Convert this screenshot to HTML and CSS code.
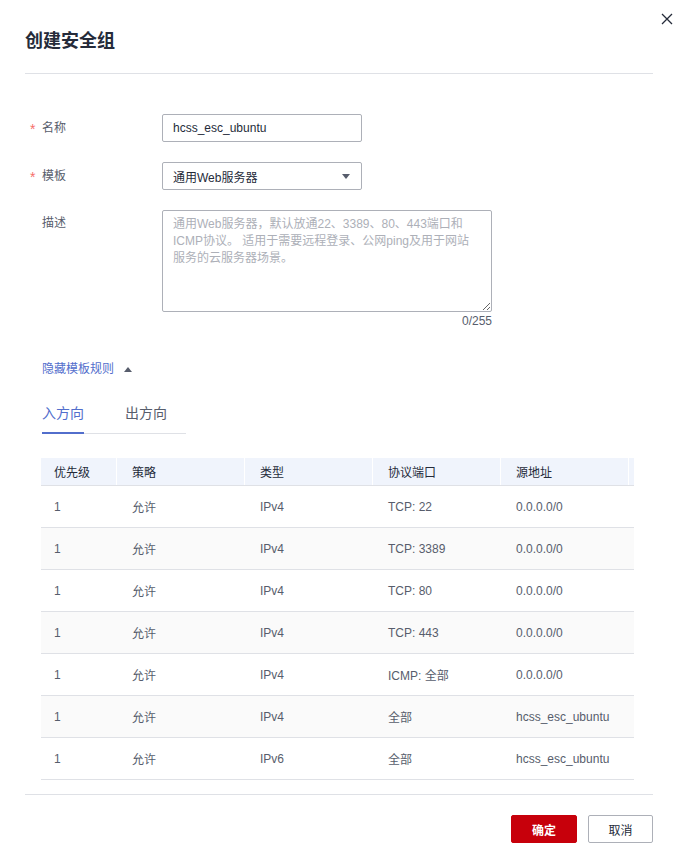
FILE: index.html
```html
<!DOCTYPE html>
<html lang="zh-CN">

<head>
    <meta charset="UTF-8">
    <meta name="viewport" content="width=device-width, initial-scale=1.0">
    <title>创建安全组</title>
    <link rel="stylesheet" href="styles.css">
</head>

<body>
    <div class="dialog">
        <div class="dialog-header">
            <h2>创建安全组</h2>
        </div>
        <span class="close">
            <svg width="12" height="12" viewBox="0 0 12 12"><path d="M1 1L11 11M11 1L1 11" stroke="#252b3a" stroke-width="1.3" fill="none"/></svg>
        </span>

        <div class="form">
            <div class="form-row">
                <label class="form-label required">名称</label>
                <input class="input" type="text" value="hcss_esc_ubuntu">
            </div>
            <div class="form-row">
                <label class="form-label required">模板</label>
                <div class="select">
                    <span>通用Web服务器</span>
                    <span class="select-arrow"></span>
                </div>
            </div>
            <div class="form-row top">
                <label class="form-label">描述</label>
                <div class="textarea-wrap">
                    <textarea class="textarea" placeholder="通用Web服务器，默认放通22、3389、80、443端口和&#10;ICMP协议。 适用于需要远程登录、公网ping及用于网站&#10;服务的云服务器场景。"></textarea>
                    <div class="counter">0/255</div>
                </div>
            </div>
        </div>

        <div class="rules">
            <a class="toggle">隐藏模板规则 <span class="caret"></span></a>

            <div class="tabs">
                <span class="tab active">入方向</span>
                <span class="tab">出方向</span>
            </div>

            <div class="rule-table">
                <div class="rule-row head">
                    <span>优先级</span><span>策略</span><span>类型</span><span>协议端口</span><span>源地址</span><span></span>
                </div>
                <div class="rule-row">
                    <span>1</span><span>允许</span><span>IPv4</span><span>TCP: 22</span><span>0.0.0.0/0</span><span></span>
                </div>
                <div class="rule-row">
                    <span>1</span><span>允许</span><span>IPv4</span><span>TCP: 3389</span><span>0.0.0.0/0</span><span></span>
                </div>
                <div class="rule-row">
                    <span>1</span><span>允许</span><span>IPv4</span><span>TCP: 80</span><span>0.0.0.0/0</span><span></span>
                </div>
                <div class="rule-row">
                    <span>1</span><span>允许</span><span>IPv4</span><span>TCP: 443</span><span>0.0.0.0/0</span><span></span>
                </div>
                <div class="rule-row">
                    <span>1</span><span>允许</span><span>IPv4</span><span>ICMP: 全部</span><span>0.0.0.0/0</span><span></span>
                </div>
                <div class="rule-row">
                    <span>1</span><span>允许</span><span>IPv4</span><span>全部</span><span>hcss_esc_ubuntu</span><span></span>
                </div>
                <div class="rule-row">
                    <span>1</span><span>允许</span><span>IPv6</span><span>全部</span><span>hcss_esc_ubuntu</span><span></span>
                </div>
            </div>
        </div>

        <div class="dialog-footer">
            <button class="btn primary">确定</button>
            <button class="btn">取消</button>
        </div>
    </div>
</body>

</html>
```

FILE: styles.css
```css
body {
    margin: 0;
    font-family: "Liberation Sans", "Noto Sans CJK SC", sans-serif;
    font-size: 12px;
    color: #575d6c;
    background: #fff;
}

.dialog {
    position: relative;
    width: 628px;
    padding: 0 22px 0 25px;
}

.dialog-header {
    height: 74px;
    box-sizing: border-box;
    padding-top: 29px;
    border-bottom: 1px solid #dfe1e6;
}

.dialog-header h2 {
    margin: 0;
    font-size: 18px;
    line-height: 24px;
    font-weight: bold;
    color: #252b3a;
}

.close {
    position: absolute;
    top: 13px;
    right: 2px;
    width: 12px;
    height: 12px;
    cursor: pointer;
}

.close svg {
    display: block;
}

/* formulario */
.form {
    margin-top: 40px;
    padding-left: 5px;
}

.form-row {
    display: flex;
    align-items: center;
    margin-bottom: 20px;
}

.form-row.top {
    align-items: flex-start;
    margin-bottom: 0;
}

.form-label {
    width: 132px;
    padding-left: 12px;
    box-sizing: border-box;
    position: relative;
    line-height: 16px;
    color: #575d6c;
}

.form-row.top .form-label {
    padding-top: 5px;
}

.form-label.required::before {
    content: "*";
    position: absolute;
    left: 0;
    top: 1px;
    color: #f66f6a;
    font-size: 14px;
}

.input,
.select {
    width: 200px;
    height: 28px;
    box-sizing: border-box;
    border: 1px solid #adb0b8;
    border-radius: 2px;
    padding: 0 10px;
    font-family: inherit;
    font-size: 12px;
    color: #252b3a;
    outline: none;
}

.select {
    display: flex;
    align-items: center;
    justify-content: space-between;
}

.select-arrow {
    width: 0;
    height: 0;
    border-left: 4px solid transparent;
    border-right: 4px solid transparent;
    border-top: 5px solid #575d6c;
    margin-right: 1px;
}

.textarea-wrap {
    width: 330px;
}

.textarea {
    display: block;
    width: 330px;
    height: 102px;
    box-sizing: border-box;
    border: 1px solid #adb0b8;
    border-radius: 2px;
    padding: 5px 10px;
    font-family: inherit;
    font-size: 12px;
    line-height: 17px;
    color: #252b3a;
    outline: none;
    margin: 0;
}

.textarea::placeholder {
    color: #adb0b8;
}

.counter {
    text-align: right;
    line-height: 16px;
    margin-top: 1px;
    color: #575d6c;
}

/* reglas */
.rules {
    padding-left: 17px;
}

.toggle {
    display: inline-flex;
    align-items: center;
    margin-top: 30px;
    line-height: 20px;
    color: #526ecc;
    cursor: pointer;
}

.caret {
    display: inline-block;
    width: 0;
    height: 0;
    margin-left: 10px;
    border-left: 4px solid transparent;
    border-right: 4px solid transparent;
    border-bottom: 5px solid #575d6c;
}

.tabs {
    display: flex;
    gap: 41px;
    width: 144px;
    margin-top: 24px;
    border-bottom: 1px solid #dfe1e6;
}

.tab {
    font-size: 14px;
    line-height: 20px;
    padding-bottom: 9px;
    color: #575d6c;
    border-bottom: 2px solid transparent;
    margin-bottom: -1px;
    cursor: pointer;
}

.tab.active {
    color: #526ecc;
    border-bottom-color: #526ecc;
}

.rule-table {
    width: 593px;
    margin-top: 24px;
    margin-left: -1px;
}

.rule-row {
    display: grid;
    grid-template-columns: 76px 128px 128px 128px 128px 5px;
    height: 42px;
    box-sizing: border-box;
    border-bottom: 1px solid #dfe1e6;
    align-items: center;
}

.rule-row span {
    padding-left: 15px;
    white-space: nowrap;
}

.rule-row span:first-child {
    padding-left: 13px;
}

.rule-row:nth-child(odd) {
    background: #fafafa;
}

.rule-row.head {
    height: 28px;
    background: #f0f4fc;
    color: #252b3a;
    align-items: stretch;
}

.rule-row.head span {
    display: flex;
    align-items: center;
    border-right: 1px solid #fff;
}

.rule-row.head span:last-child {
    border-right: none;
    padding: 0;
}

/* pie */
.dialog-footer {
    display: flex;
    justify-content: flex-end;
    gap: 11px;
    margin-top: 14px;
    padding-top: 20px;
    border-top: 1px solid #dfe1e6;
}

.btn {
    height: 28px;
    width: 65px;
    border: 1px solid #adb0b8;
    border-radius: 2px;
    background: #fff;
    color: #252b3a;
    font-family: inherit;
    font-size: 12px;
    cursor: pointer;
}

.btn.primary {
    width: 66px;
    background: #c7000b;
    border-color: #c7000b;
    color: #fff;
    font-weight: bold;
}
```
